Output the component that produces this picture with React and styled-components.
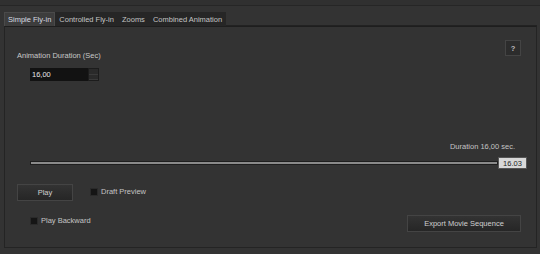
import React from 'react'
import styled, { createGlobalStyle } from 'styled-components'

const Global = createGlobalStyle`
  body {
    margin: 0;
    background: #2e2e2e;
    font-family: "Liberation Sans", Arial, sans-serif;
  }
`

function App() {
  return (
    <Screen>
      <Global />
      <TopStrip />
      <TabBar>
        <Tab active>Simple Fly-in</Tab>
        <Tab>Controlled Fly-in</Tab>
        <Tab>Zooms</Tab>
        <Tab>Combined Animation</Tab>
        <TabFill />
      </TabBar>
      <Panel>
        <Header>
          <Field>
            <Label>Animation Duration (Sec)</Label>
            <Spin>
              <SpinInput>16,00</SpinInput>
              <SpinArrows>
                <span />
                <span />
              </SpinArrows>
            </Spin>
          </Field>
          <Help>?</Help>
        </Header>
        <DurationText>Duration 16,00 sec.</DurationText>
        <SliderRow>
          <Track />
          <Handle>16.03</Handle>
        </SliderRow>
        <ControlRow>
          <Button width={56}>Play</Button>
          <Check>
            <Box />
            Draft Preview
          </Check>
        </ControlRow>
        <BottomRow>
          <Check>
            <Box />
            Play Backward
          </Check>
          <Button width={114}>Export Movie Sequence</Button>
        </BottomRow>
      </Panel>
    </Screen>
  )
}

export default App

const Screen = styled.div`
  width: 540px;
  height: 254px;
  background: #333333;
  display: flex;
  flex-direction: column;
  overflow: hidden;
  font-size: 7.5px;
  color: #c8c8c8;
`
const TopStrip = styled.div`
  height: 5px;
  background: #303030;
  border-bottom: 1px solid #262626;
`
const TabBar = styled.div`
  display: flex;
  margin: 6px 3px 0 4px;
  height: 14px;
`
const Tab = styled.div`
  display: flex;
  align-items: center;
  padding: 0 3px;
  height: 14px;
  background: ${p => (p.active ? '#3d3d3d' : '#262626')};
  color: ${p => (p.active ? '#d6dbe2' : '#c4c4c4')};
  border: 1px solid ${p => (p.active ? '#4a4a4a' : '#262626')};
  border-bottom: none;
  box-sizing: border-box;
  white-space: nowrap;
`
const TabFill = styled.div`
  flex: 1;
  border-bottom: 1px solid #222;
`
const Panel = styled.div`
  margin: 0 3px 0 4px;
  height: 222px;
  border: 1px solid #242424;
  border-top: 1px solid #1e1e1e;
  display: flex;
  flex-direction: column;
  box-sizing: border-box;
`
const Header = styled.div`
  display: flex;
  justify-content: space-between;
  align-items: flex-start;
  padding: 13px 15px 0 12px;
`
const Field = styled.div`
  display: flex;
  flex-direction: column;
  padding-top: 11px;
`
const Label = styled.div`
  line-height: 10px;
  color: #c8c8c8;
`
const Spin = styled.div`
  display: flex;
  margin: 7px 0 0 13px;
  height: 13px;
`
const SpinInput = styled.div`
  width: 58px;
  background: #121212;
  color: #e6e6e6;
  display: flex;
  align-items: center;
  padding-left: 2px;
  box-sizing: border-box;
`
const SpinArrows = styled.div`
  width: 11px;
  display: flex;
  flex-direction: column;
  background: #2a2a2a;
  border: 1px solid #1c1c1c;
  box-sizing: border-box;
  span {
    flex: 1;
    border-bottom: 1px solid #3a3a3a;
  }
`
const Help = styled.div`
  width: 16px;
  height: 16px;
  box-sizing: border-box;
  border: 1px solid #444;
  background: #2c2c2c;
  color: #bbb;
  font-weight: bold;
  display: flex;
  align-items: center;
  justify-content: center;
`
const DurationText = styled.div`
  align-self: flex-end;
  margin: 61px 21px 0 0;
  line-height: 10px;
  color: #c4c4c4;
`
const SliderRow = styled.div`
  display: flex;
  align-items: center;
  margin: 5px 0 0 25px;
  width: 497px;
`
const Track = styled.div`
  flex: 1;
  height: 2px;
  background: #8a8a8a;
  border: 1px solid #1e1e1e;
`
const Handle = styled.div`
  width: 29px;
  height: 12px;
  box-sizing: border-box;
  background: #d8d8d8;
  border: 1px solid #555;
  color: #222;
  display: flex;
  align-items: center;
  justify-content: center;
`
const ControlRow = styled.div`
  display: flex;
  align-items: center;
  gap: 17px;
  margin: 15px 0 0 12px;
`
const Button = styled.div`
  width: ${p => p.width}px;
  height: 17px;
  box-sizing: border-box;
  border: 1px solid #444;
  background: linear-gradient(#333, #262626);
  color: #cfcfcf;
  display: flex;
  align-items: center;
  justify-content: center;
`
const Check = styled.div`
  display: flex;
  align-items: center;
  gap: 3px;
  color: #c4c4c4;
  margin-top: -2px;
`
const Box = styled.div`
  width: 8px;
  height: 8px;
  background: #151515;
  border: 1px solid #2a2a2a;
  box-sizing: border-box;
`
const BottomRow = styled.div`
  display: flex;
  justify-content: space-between;
  align-items: center;
  margin: 14px 15px 0 25px;
  ${Check} {
    margin-top: -6px;
  }
`
